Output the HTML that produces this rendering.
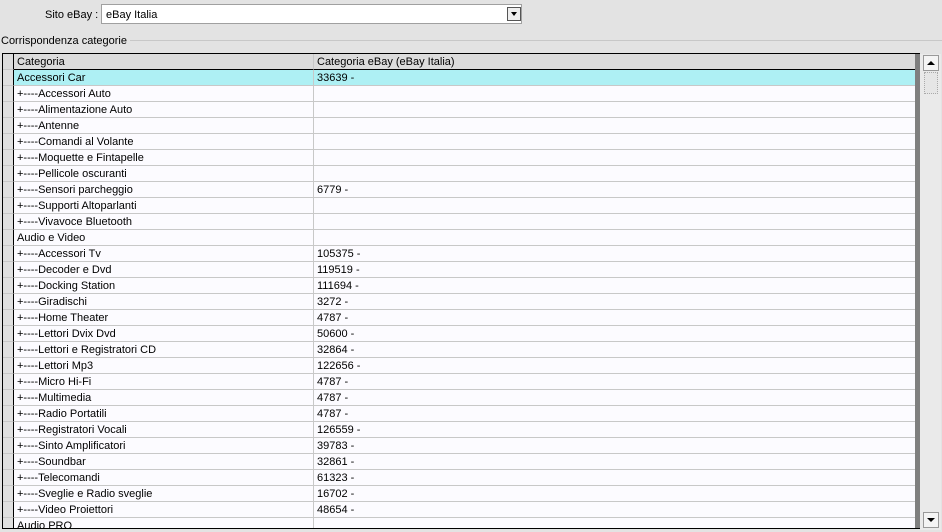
<!DOCTYPE html><html><head><style>
body{margin:0;width:942px;height:532px;background:#e3e3e3;font-family:"Liberation Sans",sans-serif;font-size:11px;color:#000;position:relative;overflow:hidden}
.a{position:absolute}
.row{position:absolute;left:3px;width:912px;height:16px}
.rh{position:absolute;left:0;top:0;width:10px;height:15px;background:#e0e0e0;border-right:1px solid #000;border-bottom:1px solid #c8c8c8}
.c1,.c2{position:absolute;top:0;height:15px;line-height:17px;border-bottom:1px solid #c8c8c8;background:#fcfbff;white-space:nowrap;overflow:hidden;padding-left:3px;box-sizing:content-box}
.c1{left:11px;width:296px;border-right:1px solid #c8c8c8}
.c2{left:311px;width:598px}
.sel .c1,.sel .c2{background:#aef0f4}
</style></head><body>
<div class="a" style="left:45px;top:9px;font-size:11px">Sito eBay :</div>
<div class="a" style="left:101px;top:4px;width:421px;height:20px;background:#fff;border:1px solid #a0a0a0;box-sizing:border-box"></div>
<div class="a" style="left:106px;top:9px;font-size:11px">eBay Italia</div>
<div class="a" style="left:507px;top:7px;width:14px;height:14px;border:1px solid #555;box-sizing:border-box;background:#eee"><div style="position:absolute;left:3px;top:4px;border-left:3px solid transparent;border-right:3px solid transparent;border-top:4px solid #000"></div></div>
<div class="a" style="left:1px;top:35px;font-size:11px">Corrispondenza categorie</div>
<div class="a" style="left:130px;top:40px;width:812px;height:1px;background:#c8c8c8"></div>
<div class="a" style="left:2px;top:53px;width:918px;height:476px;border:1px solid #000;box-sizing:border-box;background:#fcfbff"></div>
<div class="a" style="left:914px;top:54px;width:6px;height:474px;background:#7f7f7f"></div>
<div class="a" style="left:920px;top:54px;width:21px;height:476px;background:#eaeaea"></div>
<div class="a" style="left:923px;top:55px;width:16px;height:16px;background:#f4f4f4;border:1px solid #999;box-sizing:border-box"><div style="position:absolute;left:3px;top:5px;border-left:4px solid transparent;border-right:4px solid transparent;border-bottom:4px solid #000"></div></div>
<div class="a" style="left:924px;top:72px;width:14px;height:22px;background:#e6e6e6;border:1px dotted #aaa;box-sizing:border-box"></div>
<div class="a" style="left:923px;top:512px;width:16px;height:16px;background:#f4f4f4;border:1px solid #999;box-sizing:border-box"><div style="position:absolute;left:3px;top:5px;border-left:4px solid transparent;border-right:4px solid transparent;border-top:4px solid #000"></div></div>
<div class="row" style="top:54px"><div class="rh" style="background:#dcdcdc"></div><div class="c1" style="background:#dcdcdc;border-bottom-color:#000">Categoria</div><div class="c2" style="background:#dcdcdc;border-bottom-color:#000">Categoria eBay (eBay Italia)</div></div>
<div id="r"></div>
<script>
var d=[["Accessori Car","33639 -"],["+----Accessori Auto",""],["+----Alimentazione Auto",""],["+----Antenne",""],["+----Comandi al Volante",""],["+----Moquette e Fintapelle",""],["+----Pellicole oscuranti",""],["+----Sensori parcheggio","6779 -"],["+----Supporti Altoparlanti",""],["+----Vivavoce Bluetooth",""],["Audio e Video",""],["+----Accessori Tv","105375 -"],["+----Decoder e Dvd","119519 -"],["+----Docking Station","111694 -"],["+----Giradischi","3272 -"],["+----Home Theater","4787 -"],["+----Lettori Dvix Dvd","50600 -"],["+----Lettori e Registratori CD","32864 -"],["+----Lettori Mp3","122656 -"],["+----Micro Hi-Fi","4787 -"],["+----Multimedia","4787 -"],["+----Radio Portatili","4787 -"],["+----Registratori Vocali","126559 -"],["+----Sinto Amplificatori","39783 -"],["+----Soundbar","32861 -"],["+----Telecomandi","61323 -"],["+----Sveglie e Radio sveglie","16702 -"],["+----Video Proiettori","48654 -"],["Audio PRO",""]];
var h="";d.forEach(function(r,i){var t=70+16*i;var hh=i==28?"height:10px;overflow:hidden;":"";h+='<div class="row'+(i==0?' sel':'')+'" style="top:'+t+'px;'+hh+'"><div class="rh"></div><div class="c1">'+r[0]+'</div><div class="c2">'+r[1]+'</div></div>';});
document.getElementById("r").innerHTML=h;
</script>
<div class="a" style="left:2px;top:528px;width:918px;height:1px;background:#000"></div>
</body></html>
